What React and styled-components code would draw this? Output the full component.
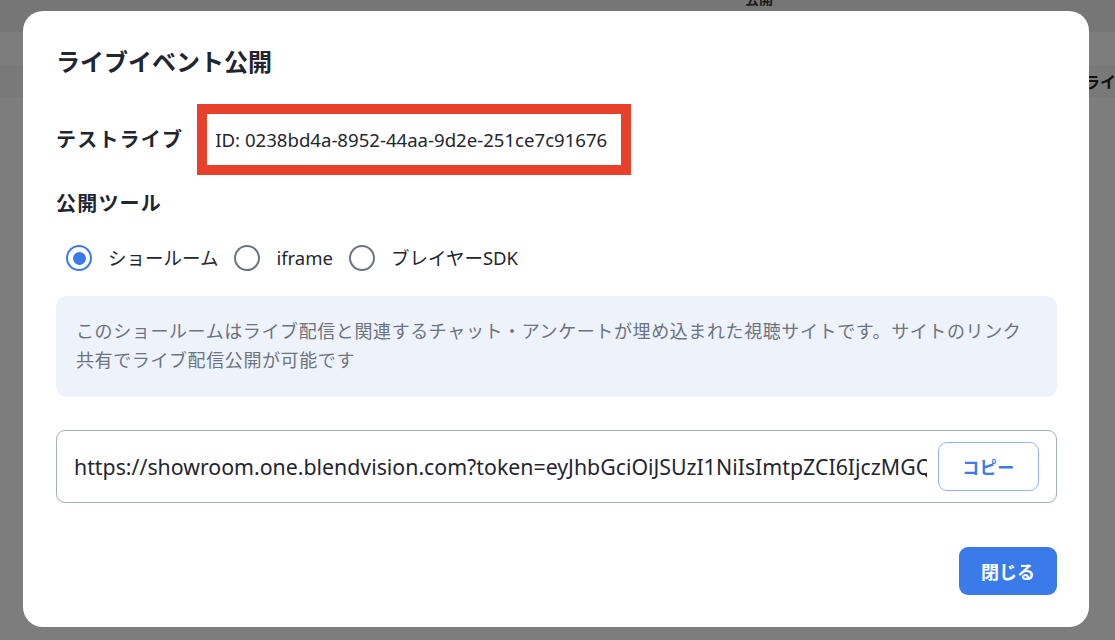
import React, { useState } from "react";
import styled, { createGlobalStyle } from "styled-components";

const GlobalStyle = createGlobalStyle`
  html, body { margin: 0; padding: 0; }
  body {
    width: 1115px;
    height: 640px;
    overflow: hidden;
    background: #ffffff;
    font-family: "Noto Sans", "Noto Sans CJK JP", sans-serif;
    color: #1f2630;
  }
  * { box-sizing: border-box; }
`;

const Page = styled.div`
  width: 1115px;
  height: 640px;
  background: #fbfbfb;
  display: flex;
  flex-direction: column;
`;

const PageHeader = styled.div`
  height: 32px;
  background: #ececed;
  display: flex;
  padding-left: 745px;
`;

const HeaderText = styled.span`
  font-size: 14px;
  font-weight: 700;
  line-height: 14px;
  margin-top: -8px;
  color: #333;
`;

const PageRow = styled.div`
  margin-top: 33px;
  height: 32px;
  background: #f3f3f3;
  display: flex;
  align-items: center;
  padding-left: 1084px;
  font-size: 16px;
  font-weight: 700;
  color: #222;
  white-space: nowrap;
  overflow: hidden;
`;

const Overlay = styled.div`
  position: fixed;
  inset: 0;
  background: rgba(0, 0, 0, 0.5);
  padding: 11px 0 0 23px;
`;

const Modal = styled.div`
  width: 1066px;
  height: 616px;
  background: #ffffff;
  border-radius: 20px;
  padding: 37px 32px 32px 33px;
  display: flex;
  flex-direction: column;
`;

const Title = styled.h2`
  margin: 0;
  font-size: 24px;
  line-height: 28px;
  font-weight: 700;
  color: #1f2630;
`;

const NameRow = styled.div`
  margin-top: 28px;
  display: flex;
  align-items: center;
  gap: 14px;
`;

const SectionLabel = styled.div`
  font-size: 20px;
  font-weight: 700;
  line-height: 26px;
  letter-spacing: 1.2px;
  color: #1f2630;
`;

const IdBox = styled.div`
  width: 434px;
  height: 71px;
  border: 10px solid #e8402a;
  display: flex;
  align-items: center;
  padding-left: 8px;
  font-size: 18.6px;
  color: #1f2630;
  white-space: nowrap;
`;

const ToolsLabel = styled(SectionLabel)`
  margin-top: 16px;
`;

const RadioGroup = styled.div`
  margin-top: 28px;
  display: flex;
  align-items: center;
  gap: 16px;
  padding-left: 10px;
`;

const RadioItem = styled.label`
  display: flex;
  align-items: center;
  gap: 16px;
  cursor: pointer;
  font-size: 18.5px;
  line-height: 26px;
  color: #1f2630;
`;

const RadioCircle = styled.span`
  width: 26px;
  height: 26px;
  border-radius: 50%;
  border: ${(p) => (p.$checked ? "2.5px solid #3a7be9" : "2.5px solid #6b7480")};
  display: flex;
  align-items: center;
  justify-content: center;
  &::after {
    content: "";
    display: ${(p) => (p.$checked ? "block" : "none")};
    width: 13px;
    height: 13px;
    border-radius: 50%;
    background: #3a7be9;
  }
`;

const InfoBox = styled.div`
  margin-top: 25px;
  height: 101px;
  background: #eef2fb;
  border-radius: 10px;
  padding: 21px 20px 0 20px;
  font-size: 18px;
  letter-spacing: 0.6px;
  line-height: 29px;
  color: #6b7480;
`;

const UrlField = styled.div`
  margin-top: 33px;
  height: 73px;
  border: 1px solid #a3acb9;
  border-radius: 9px;
  display: flex;
  align-items: center;
  padding: 0 17px 0 17px;
  gap: 11px;
`;

const UrlText = styled.div`
  flex: 1;
  min-width: 0;
  overflow: hidden;
  white-space: nowrap;
  font-size: 21.3px;
  color: #1f2630;
`;

const CopyButton = styled.button`
  flex: none;
  width: 101px;
  height: 49px;
  border: 1px solid #93b4f0;
  border-radius: 9px;
  background: #ffffff;
  color: #3a7be9;
  font-family: "Noto Sans", "Noto Sans CJK JP", sans-serif;
  font-size: 17px;
  letter-spacing: 0.5px;
  font-weight: 700;
  cursor: pointer;
`;

const Footer = styled.div`
  margin-top: 44px;
  display: flex;
  justify-content: flex-end;
`;

const CloseButton = styled.button`
  width: 98px;
  height: 48px;
  border: none;
  border-radius: 9px;
  background: #3a7be9;
  color: #ffffff;
  font-family: "Noto Sans", "Noto Sans CJK JP", sans-serif;
  font-size: 18px;
  font-weight: 700;
  cursor: pointer;
`;

const tools = ["ショールーム", "iframe", "ブレイヤーSDK"];

export default function App() {
  const [tool, setTool] = useState(0);
  return (
    <>
      <GlobalStyle />
      <Page>
        <PageHeader>
          <HeaderText>公開</HeaderText>
        </PageHeader>
        <PageRow>ライブ</PageRow>
      </Page>
      <Overlay>
        <Modal>
          <Title>ライブイベント公開</Title>
          <NameRow>
            <SectionLabel>テストライブ</SectionLabel>
            <IdBox>ID: 0238bd4a-8952-44aa-9d2e-251ce7c91676</IdBox>
          </NameRow>
          <ToolsLabel>公開ツール</ToolsLabel>
          <RadioGroup>
            {tools.map((t, i) => (
              <RadioItem key={t} onClick={() => setTool(i)}>
                <RadioCircle $checked={tool === i} />
                {t}
              </RadioItem>
            ))}
          </RadioGroup>
          <InfoBox>
            このショールームはライブ配信と関連するチャット・アンケートが埋め込まれた視聴サイトです。サイトのリンク共有でライブ配信公開が可能です
          </InfoBox>
          <UrlField>
            <UrlText>
              https://showroom.one.blendvision.com?token=eyJhbGciOiJSUzI1NiIsImtpZCI6IjczMGQ0ZjU2LWE5ZTAtNGM2Ny1iYjQ1LTk5YzQ0ZTI0
            </UrlText>
            <CopyButton>コピー</CopyButton>
          </UrlField>
          <Footer>
            <CloseButton>閉じる</CloseButton>
          </Footer>
        </Modal>
      </Overlay>
    </>
  );
}
